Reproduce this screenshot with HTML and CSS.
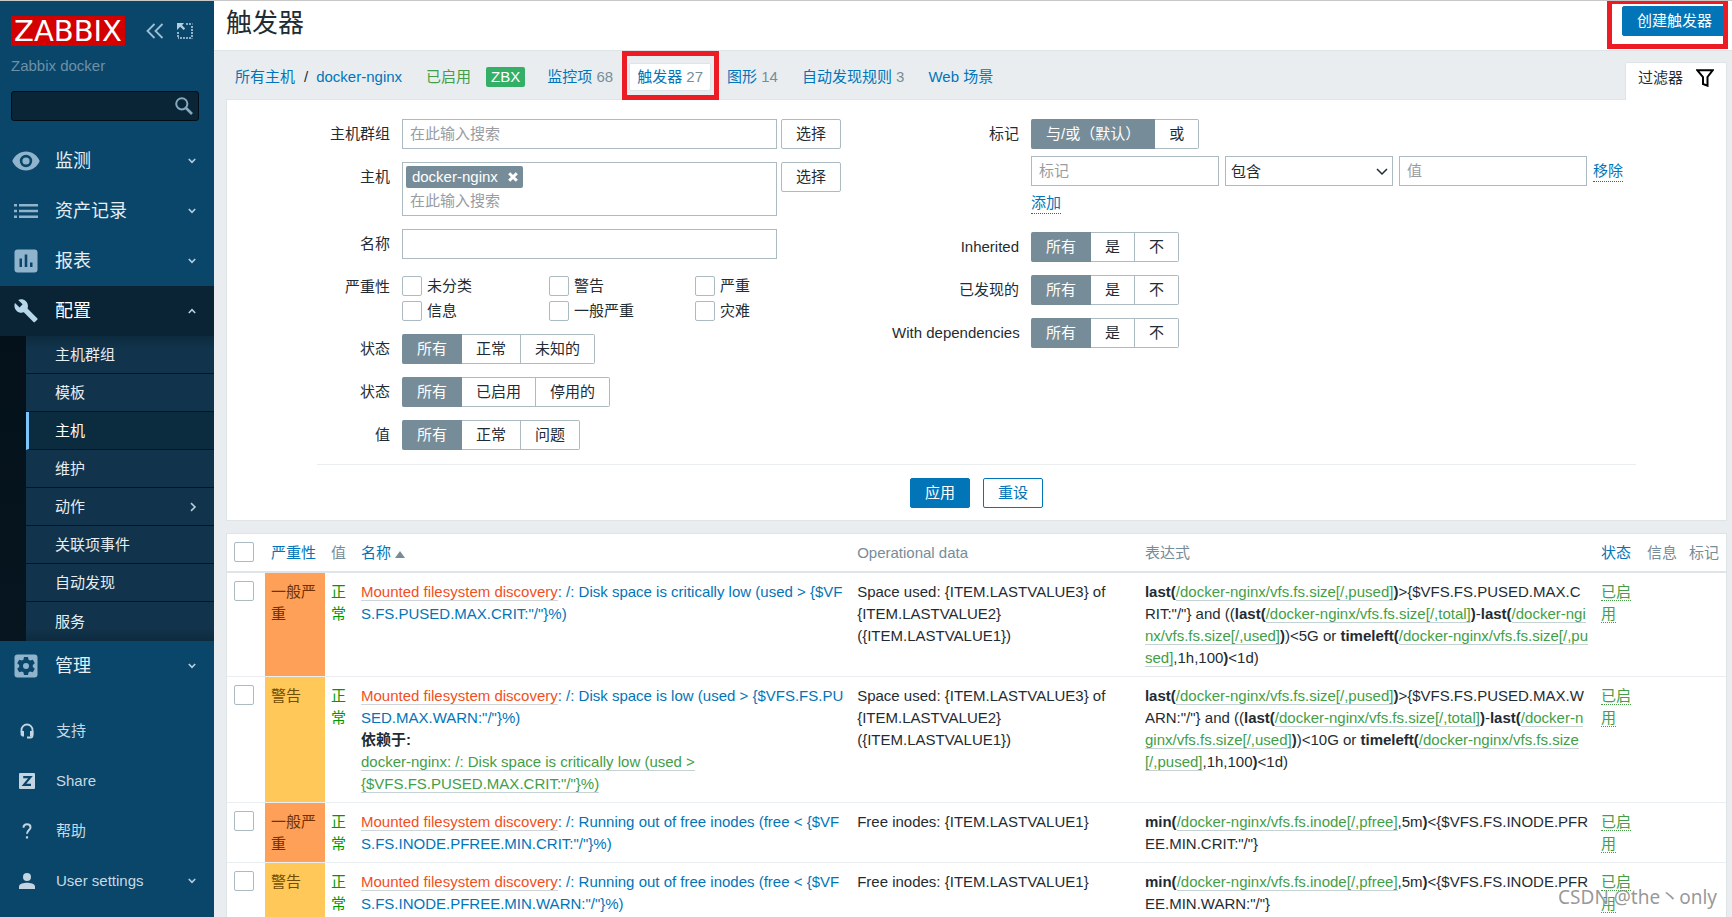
FILE: index.html
```html
<!DOCTYPE html>
<html lang="zh-CN">
<head>
<meta charset="utf-8">
<title>触发器的配置</title>
<link rel="stylesheet" href="styles.css">
</head>
<body>
<div class="app">
  <aside class="sidebar">
    <div class="brand">
      <a class="logo" href="#">ZABBIX</a>
      <button class="icon-btn" type="button" aria-label="折叠侧边栏"><svg width="18" height="16" viewBox="0 0 18 16"><path d="M8.500 1L1.500 8l7 7M16.500 1l-7 7 7 7" fill="none" stroke="#9dc0d6" stroke-width="1.800"/></svg></button>
      <button class="icon-btn" type="button" aria-label="隐藏侧边栏"><svg width="16" height="16" viewBox="0 0 16 16"><path d="M0 0h7L5 2.200l3.200 3.200-1.600 1.600L3.200 3.800 0 7z" fill="#b4cfe0"/><path d="M9 1h6.500M15 3v12.500M14 15H1M1 14V9" fill="none" stroke="#b4cfe0" stroke-width="1.600" stroke-dasharray="2 1"/></svg></button>
    </div>
    <div class="server-name">Zabbix docker</div>
    <form class="search">
      <input type="text" aria-label="搜索">
      <button type="button" aria-label="搜索"><svg width="18" height="18" viewBox="0 0 18 18"><circle cx="6.800" cy="6.800" r="5.600" fill="none" stroke="#84a8be" stroke-width="2"/><path d="M11 11l6 6" stroke="#84a8be" stroke-width="2.600"/></svg></button>
    </form>
    <nav class="menu">
      <a class="menu-item" href="#"><span class="menu-icon"><svg width="28" height="20" viewBox="0 0 28 20"><path fill="#8fb4cb" fill-rule="evenodd" d="M14 .5C7.800.5 2.500 4.400.3 10c2.200 5.600 7.500 9.500 13.700 9.500S25.500 15.600 27.700 10C25.500 4.400 20.200.5 14 .5zm0 15.700a6.200 6.200 0 1 1 0-12.400 6.200 6.200 0 0 1 0 12.400z"/><circle cx="14" cy="10" r="3.600" fill="#8fb4cb"/></svg></span>监测<svg class="chev" width="8" height="6" viewBox="0 0 8 6"><path d="M.8 1L4 4.400 7.200 1"/></svg></a>
      <a class="menu-item" href="#"><span class="menu-icon"><svg width="24" height="14" viewBox="0 0 24 14"><path fill="#8fb4cb" d="M0 0h3v2.500H0zM5 0h19v2.500H5zM0 5.700h3v2.500H0zM5 5.700h19v2.500H5zM0 11.400h3v2.500H0zM5 11.400h19v2.500H5z"/></svg></span>资产记录<svg class="chev" width="8" height="6" viewBox="0 0 8 6"><path d="M.8 1L4 4.400 7.200 1"/></svg></a>
      <a class="menu-item" href="#"><span class="menu-icon"><svg width="24" height="24" viewBox="0 0 24 24"><rect x=".5" y=".5" width="23" height="23" rx="3" fill="#8fb4cb"/><path d="M5.500 9.500H8V18H5.500zM10.700 5.500h2.600V18h-2.600zM16 13.500h2.500V18H16z" fill="#0a466a"/></svg></span>报表<svg class="chev" width="8" height="6" viewBox="0 0 8 6"><path d="M.8 1L4 4.400 7.200 1"/></svg></a>
      <a class="menu-item open" href="#"><span class="menu-icon"><svg width="24" height="24" viewBox="0 0 24 24"><path fill="#b9d7ea" d="M23.200 19.300l-9.700-9.700c.9-2.500.4-5.300-1.600-7.300C9.800.2 6.700-.2 4.200.9l4.400 4.400-3 3.100L1 4C-.1 6.500.4 9.600 2.500 11.700c2 2 4.800 2.500 7.300 1.600l9.700 9.700c.4.4 1 .4 1.400 0l2.300-2.300c.5-.4.5-1.100 0-1.400z"/></svg></span>配置<svg class="chev" width="8" height="6" viewBox="0 0 8 6"><path d="M.8 5L4 1.600 7.200 5"/></svg></a>
      <div class="submenu">
        <a href="#">主机群组</a>
        <a href="#">模板</a>
        <a class="current" href="#">主机</a>
        <a href="#">维护</a>
        <a href="#">动作<svg class="chev" width="8" height="10" viewBox="0 0 8 10"><path d="M2 1.200L6 5 2 8.800"/></svg></a>
        <a href="#">关联项事件</a>
        <a href="#">自动发现</a>
        <a href="#">服务</a>
      </div>
      <a class="menu-item" href="#"><span class="menu-icon"><svg width="24" height="24" viewBox="0 0 24 24"><rect x=".5" y=".5" width="23" height="23" rx="3" fill="#8fb4cb"/><path fill="#0a466a" d="M10 3h4l.6 2.700 1.500.9 2.700-.9 2 3.500-2 1.900v1.800l2 1.900-2 3.500-2.700-.9-1.500.9L14 21h-4l-.6-2.700-1.500-.9-2.700.9-2-3.500 2-1.900v-1.800l-2-1.900 2-3.500 2.700.9 1.500-.9z"/><circle cx="12" cy="12" r="3" fill="#8fb4cb"/></svg></span>管理<svg class="chev" width="8" height="6" viewBox="0 0 8 6"><path d="M.8 1L4 4.400 7.200 1"/></svg></a>
    </nav>
    <nav class="user-menu">
      <a href="#"><span class="menu-icon"><svg width="16" height="16" viewBox="0 0 16 16"><path fill="none" stroke="#c2d5e0" stroke-width="1.800" d="M2.500 9V7a5.500 5.500 0 0 1 11 0v5.500q0 2-2 2H8"/><path fill="#c2d5e0" d="M1.600 8H5v5.500H3.200L1.600 12zM11 8h3.400v4l-1.600 1.500H11z"/></svg></span>支持</a>
      <a href="#"><span class="menu-icon"><svg width="16" height="16" viewBox="0 0 16 16"><rect width="16" height="16" rx="1" fill="#c2d5e0"/><path d="M4.200 4.200h7.200L5 11.800h7" fill="none" stroke="#0a466a" stroke-width="2.200"/></svg></span>Share</a>
      <a href="#"><span class="menu-icon"><svg width="10" height="16" viewBox="0 0 10 16"><path d="M1.500 4.800C1.500 2.600 3 1.300 5 1.300s3.500 1.300 3.500 3.200C8.500 7 5 7.300 5 10.800" fill="none" stroke="#c2d5e0" stroke-width="2"/><path d="M3.900 13.300h2.200v2.200H3.900z" fill="#c2d5e0"/></svg></span>帮助</a>
      <a href="#"><span class="menu-icon"><svg width="16" height="16" viewBox="0 0 16 16"><circle cx="8" cy="4" r="4" fill="#c2d5e0"/><path d="M0 16v-2.500C0 10.800 5 9.800 8 9.800s8 1 8 3.700V16z" fill="#c2d5e0"/></svg></span>User settings<svg class="chev" width="8" height="6" viewBox="0 0 8 6"><path d="M.8 1L4 4.400 7.200 1"/></svg></a>
    </nav>
  </aside>

  <main class="main">
    <header class="page-head">
      <h1>触发器</h1>
      <div class="create">
        <button class="btn primary" type="button">创建触发器</button>
        <span class="mark mark-create"></span>
      </div>
    </header>

    <div class="content">
      <div class="toolbar">
        <ul class="crumbs">
          <li class="path"><a href="#">所有主机</a><span>/</span><a href="#">docker-nginx</a></li>
          <li class="status"><span class="green">已启用</span><span class="badge">ZBX</span></li>
          <li><a href="#">监控项</a> <sup>68</sup></li>
          <li class="selected"><a href="#">触发器</a> <sup>27</sup><span class="mark mark-tab"></span></li>
          <li><a href="#">图形</a> <sup>14</sup></li>
          <li><a href="#">自动发现规则</a> <sup>3</sup></li>
          <li><a href="#">Web 场景</a></li>
        </ul>
        <button class="filter-tab" type="button">过滤器<svg width="18" height="18" viewBox="0 0 18 18"><path d="M1.200 1.200h15.600L11.500 8v8.700L7 15V8z" fill="none" stroke="#000" stroke-width="2"/></svg></button>
      </div>

      <form class="filter">
        <div class="filter-body">
          <div class="fields">
            <label for="groups">主机群组</label>
            <div class="row"><input class="text wide" id="groups" type="text" placeholder="在此输入搜索"><button class="btn" type="button">选择</button></div>
            <label for="hosts">主机</label>
            <div class="row">
              <div class="multi wide"><span class="chip">docker-nginx<button type="button" aria-label="移除"><svg width="10" height="10" viewBox="0 0 10 10"><path d="M1.200 1.200l7.600 7.600M8.800 1.200L1.200 8.800" stroke="#fff" stroke-width="3"/></svg></button></span><input id="hosts" type="text" placeholder="在此输入搜索"></div>
              <button class="btn" type="button">选择</button>
            </div>
            <label for="name">名称</label>
            <div class="row"><input class="text wide" id="name" type="text"></div>
            <span class="label">严重性</span>
            <div class="checks">
              <label><input type="checkbox">未分类</label><label><input type="checkbox">警告</label><label><input type="checkbox">严重</label>
              <label><input type="checkbox">信息</label><label><input type="checkbox">一般严重</label><label><input type="checkbox">灾难</label>
            </div>
            <span class="label">状态</span>
            <div class="seg"><label><input type="radio" name="state" checked><span>所有</span></label><label><input type="radio" name="state"><span>正常</span></label><label><input type="radio" name="state"><span>未知的</span></label></div>
            <span class="label">状态</span>
            <div class="seg"><label><input type="radio" name="status" checked><span>所有</span></label><label><input type="radio" name="status"><span>已启用</span></label><label><input type="radio" name="status"><span>停用的</span></label></div>
            <span class="label">值</span>
            <div class="seg"><label><input type="radio" name="value" checked><span>所有</span></label><label><input type="radio" name="value"><span>正常</span></label><label><input type="radio" name="value"><span>问题</span></label></div>
          </div>

          <div class="fields right">
            <span class="label">标记</span>
            <div class="tags">
              <div class="seg"><label><input type="radio" name="eval" checked><span>与/或（默认）</span></label><label><input type="radio" name="eval"><span>或</span></label></div>
              <div class="tag-row">
                <input class="text tag-input" type="text" placeholder="标记" aria-label="标记">
                <span class="select"><select aria-label="运算符"><option>包含</option></select><svg width="12" height="8" viewBox="0 0 12 8"><path d="M1 1l5 5 5-5" fill="none" stroke="#1f2c33" stroke-width="1.500"/></svg></span>
                <input class="text tag-input" type="text" placeholder="值" aria-label="值">
                <a class="dotted" href="#">移除</a>
              </div>
              <a class="dotted" href="#">添加</a>
            </div>
            <span class="label">Inherited</span>
            <div class="seg"><label><input type="radio" name="inh" checked><span>所有</span></label><label><input type="radio" name="inh"><span>是</span></label><label><input type="radio" name="inh"><span>不</span></label></div>
            <span class="label">已发现的</span>
            <div class="seg"><label><input type="radio" name="disc" checked><span>所有</span></label><label><input type="radio" name="disc"><span>是</span></label><label><input type="radio" name="disc"><span>不</span></label></div>
            <span class="label">With dependencies</span>
            <div class="seg"><label><input type="radio" name="dep" checked><span>所有</span></label><label><input type="radio" name="dep"><span>是</span></label><label><input type="radio" name="dep"><span>不</span></label></div>
          </div>
        </div>
        <div class="filter-actions">
          <button class="btn primary" type="button">应用</button>
          <button class="btn outline" type="button">重设</button>
        </div>
      </form>

      <table class="list">
        <colgroup><col class="c-check"><col class="c-sev"><col class="c-val"><col class="c-name"><col class="c-op"><col class="c-expr"><col class="c-status"><col class="c-info"><col class="c-tags"></colgroup>
        <thead>
          <tr><th><input type="checkbox" aria-label="全选"></th><th><a href="#">严重性</a></th><th>值</th><th><a href="#">名称<span class="sort"></span></a></th><th>Operational data</th><th>表达式</th><th><a href="#">状态</a></th><th>信息</th><th>标记</th></tr>
        </thead>
        <tbody>
          <tr>
            <td><input type="checkbox" aria-label="选择"></td><td class="high">一般严重</td><td class="ok">正常</td>
            <td class="break"><a class="rule" href="#">Mounted filesystem discovery</a><a href="#">: /: Disk space is critically low (used &gt; {$VFS.FS.PUSED.MAX.CRIT:"/"}%)</a></td>
            <td>Space used: {ITEM.LASTVALUE3} of {ITEM.LASTVALUE2} ({ITEM.LASTVALUE1})</td>
            <td class="break"><b>last(</b><a class="item" href="#">/docker-nginx/vfs.fs.size[/,pused]</a><b>)</b>&gt;{$VFS.FS.PUSED.MAX.CRIT:"/"} and ((<b>last(</b><a class="item" href="#">/docker-nginx/vfs.fs.size[/,total]</a><b>)</b>-<b>last(</b><a class="item" href="#">/docker-nginx/vfs.fs.size[/,used]</a><b>)</b>)&lt;5G or <b>timeleft(</b><a class="item" href="#">/docker-nginx/vfs.fs.size[/,pused]</a>,1h,100<b>)</b>&lt;1d)</td>
            <td><a class="enabled" href="#">已启用</a></td><td></td><td></td>
          </tr>
          <tr>
            <td><input type="checkbox" aria-label="选择"></td><td class="warn">警告</td><td class="ok">正常</td>
            <td class="break"><a class="rule" href="#">Mounted filesystem discovery</a><a href="#">: /: Disk space is low (used &gt; {$VFS.FS.PUSED.MAX.WARN:"/"}%)</a>
              <div class="depends"><b>依赖于:</b><br><a class="item" href="#">docker-nginx: /: Disk space is critically low (used &gt; {$VFS.FS.PUSED.MAX.CRIT:"/"}%)</a></div></td>
            <td>Space used: {ITEM.LASTVALUE3} of {ITEM.LASTVALUE2} ({ITEM.LASTVALUE1})</td>
            <td class="break"><b>last(</b><a class="item" href="#">/docker-nginx/vfs.fs.size[/,pused]</a><b>)</b>&gt;{$VFS.FS.PUSED.MAX.WARN:"/"} and ((<b>last(</b><a class="item" href="#">/docker-nginx/vfs.fs.size[/,total]</a><b>)</b>-<b>last(</b><a class="item" href="#">/docker-nginx/vfs.fs.size[/,used]</a><b>)</b>)&lt;10G or <b>timeleft(</b><a class="item" href="#">/docker-nginx/vfs.fs.size[/,pused]</a>,1h,100<b>)</b>&lt;1d)</td>
            <td><a class="enabled" href="#">已启用</a></td><td></td><td></td>
          </tr>
          <tr>
            <td><input type="checkbox" aria-label="选择"></td><td class="high">一般严重</td><td class="ok">正常</td>
            <td class="break"><a class="rule" href="#">Mounted filesystem discovery</a><a href="#">: /: Running out of free inodes (free &lt; {$VFS.FS.INODE.PFREE.MIN.CRIT:"/"}%)</a></td>
            <td>Free inodes: {ITEM.LASTVALUE1}</td>
            <td class="break"><b>min(</b><a class="item" href="#">/docker-nginx/vfs.fs.inode[/,pfree]</a>,5m<b>)</b>&lt;{$VFS.FS.INODE.PFREE.MIN.CRIT:"/"}</td>
            <td><a class="enabled" href="#">已启用</a></td><td></td><td></td>
          </tr>
          <tr>
            <td><input type="checkbox" aria-label="选择"></td><td class="warn">警告</td><td class="ok">正常</td>
            <td class="break"><a class="rule" href="#">Mounted filesystem discovery</a><a href="#">: /: Running out of free inodes (free &lt; {$VFS.FS.INODE.PFREE.MIN.WARN:"/"}%)</a></td>
            <td>Free inodes: {ITEM.LASTVALUE1}</td>
            <td class="break"><b>min(</b><a class="item" href="#">/docker-nginx/vfs.fs.inode[/,pfree]</a>,5m<b>)</b>&lt;{$VFS.FS.INODE.PFREE.MIN.WARN:"/"}</td>
            <td><a class="enabled" href="#">已启用</a></td><td></td><td></td>
          </tr>
        </tbody>
      </table>
    </div>
  </main>
  <div class="watermark">CSDN @the丶only</div>
</div>
</body>
</html>
```
FILE: styles.css
```css
* { box-sizing: border-box; }

body {
  margin: 0;
  background: #e9edf0;
  color: #1f2c33;
  font: 15px/22px "Liberation Sans", Arial, "Noto Sans CJK SC", sans-serif;
}

a { color: #0275b8; text-decoration: none; }
button, input, select { font: inherit; color: inherit; }
button { cursor: pointer; }

.app {
  position: relative;
  display: flex;
  height: 100vh;
  overflow: hidden;
  border-top: 1px solid #c8c8c8;
}

/* Sidebar */
.sidebar {
  flex: none;
  width: 214px;
  background: #0a466a;
  color: #e6eef3;
  padding-top: 15px;
}

.brand { display: flex; align-items: center; padding-left: 11px; }

.logo {
  width: 114px;
  height: 30px;
  margin-right: 21px;
  background: #d40000;
  color: #fff;
  font: 29px/30px "DejaVu Sans", sans-serif;
  text-align: center;
}

.icon-btn {
  display: flex;
  margin-right: 13px;
  padding: 0;
  border: 0;
  background: none;
}

.server-name { padding: 9px 11px 0; color: #6c91a8; }

.search { position: relative; margin: 14px 15px 0 11px; }

.search input {
  display: block;
  width: 100%;
  height: 30px;
  padding: 0 30px 0 8px;
  border: 1px solid #020e17;
  border-radius: 3px;
  background: #0a2536;
}

.search button {
  position: absolute;
  top: 6px;
  right: 6px;
  display: flex;
  padding: 0;
  border: 0;
  background: none;
}

.menu { margin-top: 15px; }

.menu-item, .user-menu a {
  display: flex;
  align-items: center;
  height: 50px;
  padding-right: 18px;
  color: #e6eef3;
}

.menu-item { font-size: 18px; }
.menu-item.open { background: #0a2435; color: #fff; }
.menu-icon { display: flex; justify-content: center; width: 52px; margin-right: 3px; }

.chev { margin-left: auto; fill: none; stroke: #b4cfe0; stroke-width: 1.6; }

.submenu {
  padding-left: 26px;
  background: linear-gradient(#04111a, #06151f);
}

.submenu a {
  display: flex;
  align-items: center;
  height: 38px;
  padding: 0 17px 0 29px;
  border-bottom: 1px solid #051721;
  background: #11334b;
  color: #e6eef3;
}

.submenu a:first-child { background: linear-gradient(#0d2b3f, #11334b 12px); }
.submenu a:last-child { height: 39px; border-bottom: 0; background: linear-gradient(#11334b 26px, #0d2b3f); }
.submenu a.current { padding-left: 26px; border-left: 3px solid #7ac5fb; background: #0b2b3f; color: #fff; }

.user-menu { margin-top: 15px; }
.user-menu a { color: #c8d9e3; }
.user-menu .menu-icon { width: 53px; }

/* Page */
.main { flex: 1; min-width: 0; overflow-y: auto; scrollbar-width: none; }

.page-head {
  display: flex;
  justify-content: space-between;
  align-items: flex-start;
  height: 50px;
  padding: 5px 5px 0 12px;
  border-bottom: 1px solid #dfe4e7;
  background: #fff;
}

.page-head h1 { margin: 0; font-size: 26px; line-height: 34px; font-weight: 400; }
.create { position: relative; }

.content { padding: 0 5px 0 12px; }

.btn {
  flex: none;
  height: 30px;
  padding: 0 14px;
  border: 1px solid #acbbc2;
  border-radius: 2px;
  background: #fff;
  line-height: 28px;
}

.btn.primary { border-color: #0275b8; background: #0275b8; color: #fff; }
.btn.outline { border-color: #0275b8; color: #0275b8; }

.mark { position: absolute; border: 5px solid #ed1c24; pointer-events: none; }
.mark-create { top: -7px; left: -15px; right: -1px; height: 50px; }
.mark-tab { inset: -13px -9px -10px -8px; }

.toolbar { display: flex; justify-content: space-between; align-items: flex-end; height: 48px; }

.crumbs {
  display: flex;
  gap: 8px;
  align-self: flex-start;
  margin: 12px 0 0;
  padding: 0 0 0 1px;
  list-style: none;
  line-height: 26px;
  white-space: nowrap;
}

.crumbs li { position: relative; padding: 0 7px; border: 1px solid transparent; }
.crumbs .path span { padding: 0 8px 0 9px; }
.crumbs .status { display: flex; align-items: center; gap: 15px; padding-right: 5px; }
.crumbs .selected { border-color: #dfe4e7; border-radius: 2px; background: #fff; }
.crumbs sup { color: #768d99; font-size: 15px; line-height: 26px; vertical-align: baseline; }
.green { color: #429e47; }
.badge { padding: 0 5px; border-radius: 2px; background: #34af67; color: #fff; line-height: 20px; }

.filter-tab {
  position: relative;
  z-index: 1;
  display: flex;
  justify-content: space-between;
  align-items: center;
  width: 102px;
  height: 38px;
  margin-bottom: -1px;
  padding: 0 12px 8px;
  border: 1px solid #dfe4e7;
  border-bottom: 0;
  border-radius: 2px 2px 0 0;
  background: #fff;
}

/* Filter */
.filter { border: 1px solid #dfe4e7; background: #fff; }

.filter-body, .filter-actions { width: 88%; margin: 0 auto; }

.filter-body {
  display: flex;
  justify-content: space-between;
  align-items: flex-start;
  padding: 19px 0 14px;
}

.fields {
  display: grid;
  grid-template-columns: 73px auto;
  gap: 13px 12px;
  line-height: 30px;
}

.fields.right { grid-template-columns: 127px 605px; }
.fields > label, .label { text-align: right; white-space: nowrap; line-height: 30px; }

.row { display: flex; align-items: flex-start; gap: 4px; }
.wide { width: 375px; }

.text, .multi, .select select {
  height: 30px;
  padding: 0 7px;
  border: 1px solid #acbbc2;
  border-radius: 0;
  background: #fff;
}

.multi { display: flex; flex-direction: column; align-items: flex-start; height: 54px; padding: 3px; }
.multi input { width: 100%; height: 26px; padding: 0 4px; border: 0; background: none; }
::placeholder { color: #9a9c9f; opacity: 1; }

.chip {
  display: flex;
  align-items: center;
  gap: 10px;
  height: 22px;
  padding: 0 5px 0 6px;
  border-radius: 2px;
  background: #768d99;
  color: #fff;
  line-height: 22px;
}

.chip button { display: flex; padding: 0; border: 0; background: none; }

.checks {
  display: grid;
  grid-template-columns: 147px 146px auto;
  gap: 5px 0;
  padding-top: 4px;
  line-height: 20px;
}

.checks label { display: flex; gap: 5px; }

input[type="checkbox"] {
  appearance: none;
  display: block;
  width: 20px;
  height: 20px;
  margin: 0;
  border: 1px solid #acbbc2;
  border-radius: 2px;
  background: #fff;
}

.seg { display: flex; }
.seg label { position: relative; }
.seg input { position: absolute; inset: 0; margin: 0; opacity: 0; }

.seg span {
  display: block;
  height: 30px;
  padding: 0 14px;
  border: 1px solid #acbbc2;
  border-left: 0;
  line-height: 28px;
}

.seg label:first-child span { padding-left: 15px; border-radius: 2px 0 0 2px; }
.seg label:last-child span { border-radius: 0 2px 2px 0; }
.seg input:checked + span { border-color: #768d99; background: #768d99; color: #fff; }

.tags { display: flex; flex-direction: column; align-items: flex-start; gap: 7px; padding-bottom: 5px; }
.tag-row { display: grid; grid-template-columns: 188px 168px 188px auto; align-items: center; gap: 6px; }
.tag-input { width: 100%; }
.select { position: relative; display: flex; }
.select select { appearance: none; width: 100%; padding: 0 5px; }
.select svg { position: absolute; right: 5px; top: 12px; pointer-events: none; }
.dotted { border-bottom: 1px dotted #0275b8; line-height: 20px; white-space: nowrap; }

.filter-actions {
  display: flex;
  justify-content: center;
  gap: 13px;
  padding: 13px 0 12px;
  border-top: 1px solid #ebeef0;
}

/* Trigger list */
.list {
  width: 100%;
  margin-top: 12px;
  table-layout: fixed;
  border: 1px solid #dfe4e7;
  border-spacing: 0;
  background: #fff;
}

.c-check { width: 38px; }
.c-sev { width: 60px; }
.c-val { width: 30px; }
.c-name { width: 33.1%; }
.c-op { width: 19.2%; }
.c-status { width: 46px; }
.c-info { width: 42px; }
.c-tags { width: 43px; }

.list th, .list td { padding: 8px 6px 7px; text-align: left; vertical-align: top; }

.list th {
  height: 39px;
  border-bottom: 2px solid #dfe4e7;
  color: #768d99;
  font-weight: 400;
  white-space: nowrap;
}

.list td { border-bottom: 1px solid #ebeef0; overflow-wrap: break-word; }
.list th:first-child, .list td:first-child { padding: 8px 7px 0; }

.sort {
  display: inline-block;
  margin-left: 4px;
  border: 5px solid transparent;
  border-top: 0;
  border-bottom: 7px solid #768d99;
}

.list .high { background: #ffa059; color: #733100; }
.list .warn { background: #ffc859; color: #734d00; }
.list .ok { color: #009900; }
.list .break { word-break: break-all; }
.list .depends { word-break: normal; }
.list .rule { border-bottom: 1px solid #cfd5d9; color: #f24f1d; }
.list .item { border-bottom: 1px solid #c5d2d3; color: #429e47; }
.list .enabled { border-bottom: 1px dotted #429e47; color: #429e47; }

.watermark {
  position: absolute;
  right: 15px;
  bottom: 6px;
  color: rgba(125, 125, 125, .8);
  font: 19px/28px "Noto Sans", "Noto Sans CJK SC", sans-serif;
  text-shadow: 1px 1px 1px #fff;
  pointer-events: none;
}
```
